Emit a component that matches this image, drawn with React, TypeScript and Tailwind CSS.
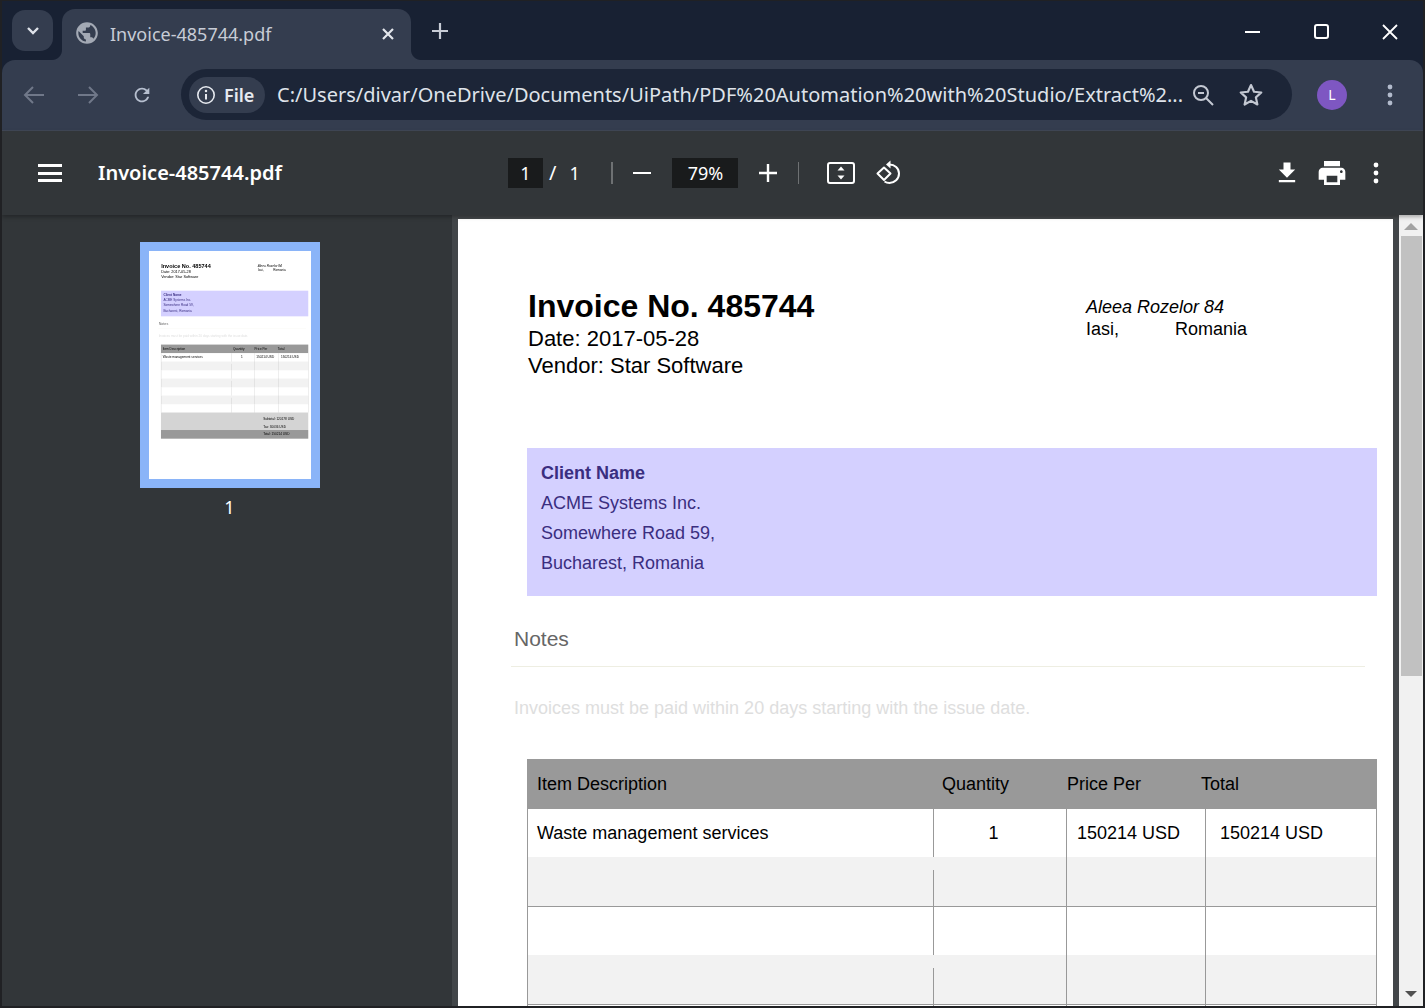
const FONT_UI = "font-['Noto_Sans',sans-serif]";
const FONT_DOC = "font-['Liberation_Sans',Arial,sans-serif]";

function Ico({ d, size, className }: { d: string; size: number; className?: string }) {
  return (
    <svg width={size} height={size} viewBox="0 0 24 24" fill="currentColor" className={className}>
      <path d={d} />
    </svg>
  );
}

function VDots({ className }: { className: string }) {
  return (
    <svg width="6" height="22" viewBox="0 0 6 22" fill="currentColor" className={className}>
      <circle cx="3" cy="3" r="2.4" />
      <circle cx="3" cy="11" r="2.4" />
      <circle cx="3" cy="19" r="2.4" />
    </svg>
  );
}

function Row({ alt, line, gap, cells }: { alt?: boolean; line?: boolean; gap?: boolean; cells?: string[] }) {
  const h = alt ? "h-[50px]" : "h-[48px]";
  return (
    <div className={`flex ${h} border-l border-r border-[#999] ${alt ? "bg-[#f2f2f2]" : "bg-white"} ${line ? "border-b" : ""}`}>
      <div className="flex w-[406px] flex-col">
        {gap ? <div className="h-[13px]" /> : null}
        <div className="flex flex-1 items-center border-r border-[#999] pl-[9px]">{cells ? cells[0] : ""}</div>
      </div>
      <div className="flex w-[133px] items-center justify-center border-r border-[#999] pr-[13px]">{cells ? cells[1] : ""}</div>
      <div className="flex w-[139px] items-center border-r border-[#999] pl-[10px]">{cells ? cells[2] : ""}</div>
      <div className="flex flex-1 items-center pl-[14px]">{cells ? cells[3] : ""}</div>
    </div>
  );
}

function InvoicePage() {
  return (
    <div className={`w-[935px] bg-white text-black ${FONT_DOC}`}>
      <div className="flex pl-[70px] pt-[68px]">
        <div className="w-[558px]">
          <div className="text-[32px] font-bold leading-[38px]">Invoice No. 485744</div>
          <div className="text-[22px] leading-[27px]">Date: 2017-05-28</div>
          <div className="text-[22px] leading-[27px]">Vendor: Star Software</div>
        </div>
        <div className="pt-[9px] text-[18px] leading-[22px]">
          <div className="italic">Aleea Rozelor 84</div>
          <div className="flex">
            <span className="w-[89px]">Iasi,</span>
            <span>Romania</span>
          </div>
        </div>
      </div>
      <div className="ml-[69px] mr-[16px] mt-[69px] h-[148px] bg-[#d4d0ff] px-[14px] pt-[10px] text-[18px] leading-[30px] text-[#3a2e80]">
        <div className="font-bold">Client Name</div>
        <div>ACME Systems Inc.</div>
        <div>Somewhere Road 59,</div>
        <div>Bucharest, Romania</div>
      </div>
      <div className="ml-[53px] mr-[28px] mt-[27px] h-[44px] border-b border-[#eeeee2] pl-[3px] font-['Liberation_Sans_Narrow','Liberation_Sans',sans-serif] text-[21px] leading-[32px] text-[#666]">
        Notes
      </div>
      <div className="ml-[56px] mt-[27px] text-[18px] leading-[28px] text-[#dedede]">
        Invoices must be paid within 20 days starting with the issue date.
      </div>
      <div className="ml-[69px] mr-[16px] mt-[37px] text-[18px] leading-[22px]">
        <div className="flex h-[50px] items-center bg-[#999]">
          <div className="w-[415px] pl-[10px]">Item Description</div>
          <div className="w-[125px]">Quantity</div>
          <div className="w-[134px]">Price Per</div>
          <div>Total</div>
        </div>
        <Row cells={["Waste management services", "1", "150214 USD", "150214 USD"]} />
        <Row alt line gap />
        <Row />
        <Row alt line gap />
        <Row />
        <Row alt line gap />
        <Row />
        <div className="flex h-[101px] flex-col bg-[#d4d4d4] pl-[590px] pt-[14px] leading-[46px]">
          <div>Subtotal: 120178 USD</div>
          <div>Tax: 30036 USD</div>
        </div>
        <div className="h-[50px] bg-[#999] pl-[590px] leading-[50px]">Total: 150214 USD</div>
      </div>
      <div className="h-[200px]" />
    </div>
  );
}

export default function App() {
  return (
    <div className={`flex h-[1008px] w-[1425px] flex-col overflow-hidden border-b-2 border-l-2 border-r-2 border-t border-[#202124] bg-[#182133] ${FONT_UI}`}>
      {/* Tab strip */}
      <div className="flex h-[59px] shrink-0 items-start">
        <button className="ml-[10px] mt-[9px] flex h-[41px] w-[41px] items-center justify-center rounded-[13px] bg-[#343d4f] text-[#dfe3ea]">
          <svg width="14" height="10" viewBox="0 0 14 10" fill="none" stroke="currentColor" strokeWidth="2.4"><path d="M2 2l5 5 5-5" /></svg>
        </button>
        <div className="relative ml-[9px] mt-[8px] flex h-[51px] w-[349px] items-center rounded-t-[13px] bg-[#343d4f] pl-[12px]">
          <span className="absolute bottom-0 left-[-10px] h-[10px] w-[10px] bg-[radial-gradient(circle_at_0_0,#182133_9.5px,#343d4f_10.5px)]" />
          <span className="absolute bottom-0 right-[-10px] h-[10px] w-[10px] bg-[radial-gradient(circle_at_100%_0,#182133_9.5px,#343d4f_10.5px)]" />
          <Ico d="M12 2C6.48 2 2 6.48 2 12s4.48 10 10 10 10-4.48 10-10S17.52 2 12 2zm-1 17.93c-3.95-.49-7-3.85-7-7.93 0-.62.08-1.21.21-1.79L9 15v1c0 1.1.9 2 2 2v1.93zm6.9-2.54c-.26-.81-1-1.39-1.9-1.39h-1v-3c0-.55-.45-1-1-1H8v-2h2c.55 0 1-.45 1-1V7h2c1.1 0 2-.9 2-2v-.41c2.93 1.19 5 4.06 5 7.41 0 2.08-.8 3.97-2.1 5.39z" size={26} className="-mt-[3px] text-[#a3a9b4]" />
          <span className="-mt-[2px] ml-[10px] flex-1 text-[18px] leading-[24px] text-[#c7ccd6]">Invoice-485744.pdf</span>
          <svg width="14" height="14" viewBox="0 0 14 14" stroke="#e4e7ec" strokeWidth="2.2" className="-mt-[2px] mr-[16px]"><path d="M2 2l10 10M12 2L2 12" /></svg>
        </div>
        <svg width="18" height="18" viewBox="0 0 18 18" stroke="#c7ccd6" strokeWidth="2.2" className="ml-[20px] mt-[21px]"><path d="M9 1v16M1 9h16" /></svg>
        <div className="flex-1" />
        <div className="mt-[30px] h-[2px] w-[15px] bg-white" />
        <div className="ml-[54px] mt-[23px] h-[15px] w-[15px] rounded-[3px] border-2 border-white" />
        <svg width="16" height="16" viewBox="0 0 16 16" stroke="white" strokeWidth="1.8" className="ml-[53px] mr-[25px] mt-[23px]"><path d="M1 1l14 14M15 1L1 15" /></svg>
      </div>
      {/* Browser toolbar */}
      <div className="flex h-[71px] shrink-0 items-center rounded-t-[13px] border-b border-[#414857] bg-[#343d4f] pb-[1px] pl-[21px]">
        <svg width="22" height="20" viewBox="0 0 22 20" fill="none" stroke="#707889" strokeWidth="2"><path d="M21 10H2M10 2l-8 8 8 8" /></svg>
        <svg width="22" height="20" viewBox="0 0 22 20" fill="none" stroke="#707889" strokeWidth="2" className="ml-[32px]"><path d="M1 10h19M12 2l8 8-8 8" /></svg>
        <svg width="22" height="22" viewBox="0 0 24 24" fill="#b6bfcf" className="ml-[32px]"><path d="M17.65 6.35A7.958 7.958 0 0 0 12 4c-4.42 0-7.99 3.58-7.99 8s3.57 8 7.99 8c3.73 0 6.84-2.55 7.73-6h-2.08A5.99 5.99 0 0 1 12 18c-3.31 0-6-2.69-6-6s2.69-6 6-6c1.66 0 3.14.69 4.22 1.78L13 11h7V4l-2.35 2.35z" /></svg>
        <div className="ml-[28px] flex h-[51px] w-[1111px] items-center rounded-full bg-[#1c2537] pl-[8px]">
          <div className="flex h-[36px] w-[76px] items-center rounded-full bg-[#343d4f] pl-[7px] text-[#e6e9ef]">
            <svg width="20" height="20" viewBox="0 0 20 20" fill="none" stroke="currentColor" strokeWidth="1.6"><circle cx="10" cy="10" r="8.2" /><path d="M10 9v5.5" strokeWidth="2" /><circle cx="10" cy="6" r="0.6" strokeWidth="1.3" /></svg>
            <span className="ml-[8px] text-[18px] font-semibold leading-[24px]">File</span>
          </div>
          <div className="ml-[12px] w-[900px] whitespace-nowrap text-[20px] leading-[26px] text-[#dfe3ea]">C:/Users/divar/OneDrive/Documents/UiPath/PDF%20Automation%20with%20Studio/Extract%2...</div>
          <svg width="24" height="24" viewBox="0 0 24 24" fill="none" stroke="#c3c8d2" strokeWidth="2" className="ml-[14px]"><circle cx="10" cy="10" r="7" /><path d="M15 15l7 7M7 10h6" /></svg>
          <svg width="26" height="26" viewBox="0 0 24 24" fill="none" stroke="#c3c8d2" strokeWidth="2" className="ml-[23px]"><path d="M12 2.8l2.8 6.2 6.7.7-5 4.5 1.4 6.6-5.9-3.4-5.9 3.4 1.4-6.6-5-4.5 6.7-.7z" strokeLinejoin="round" /></svg>
        </div>
        <div className="ml-[25px] flex h-[30px] w-[30px] items-center justify-center rounded-full bg-[#7e57c2] text-[14px] text-white">L</div>
        <VDots className="ml-[40px] text-[#b2bbcc]" />
      </div>
      {/* PDF toolbar */}
      <div className="z-10 flex h-[84px] shrink-0 items-center bg-[#323639] text-white shadow-[0_2px_4px_rgba(0,0,0,0.3)]">
        <div className="ml-[36px] flex h-[18px] w-[24px] flex-col justify-between">
          <div className="h-[3px] bg-white" />
          <div className="h-[3px] bg-white" />
          <div className="h-[3px] bg-white" />
        </div>
        <div className="ml-[36px] w-[410px] text-[20px] font-semibold leading-[26px]">Invoice-485744.pdf</div>
        <div className="flex h-[30px] w-[35px] items-center justify-center bg-[#191b1c] text-[18px]">1</div>
        <span className="ml-[6px] text-[20px]">/</span>
        <span className="ml-[13px] w-[42px] text-[18px]">1</span>
        <div className="h-[22px] w-[2px] bg-[#6e7173]" />
        <div className="ml-[20px] h-[2.5px] w-[18px] bg-white" />
        <div className="ml-[21px] flex h-[30px] w-[66px] items-center justify-center bg-[#191b1c] text-[18px]">79%</div>
        <svg width="18" height="18" viewBox="0 0 18 18" stroke="white" strokeWidth="2.4" className="ml-[21px]"><path d="M9 0v18M0 9h18" /></svg>
        <div className="ml-[21px] h-[22px] w-[1px] bg-[#6e7173]" />
        <svg width="28" height="22" viewBox="0 0 28 22" className="ml-[28px]"><rect x="1" y="1" width="26" height="20" rx="2" fill="none" stroke="white" strokeWidth="2" /><path d="M14 4.5l3.5 4h-7zM14 17.5l-3.5-4h7z" fill="white" /></svg>
        <svg width="28" height="28" viewBox="0 0 28 28" fill="none" stroke="white" strokeWidth="2" className="ml-[20px]"><path d="M9 8.5L2.5 14.5 9 21l6.5-6.5z" strokeLinejoin="round" /><path d="M14.5 5.5c5 0 9.5 3.5 9.5 9s-4.5 9.500-9.500 9.500c-2 0-3.500-.5-5-1.500" /><path d="M15.500 1.500v8l-4.500-4z" fill="white" stroke="none" /></svg>
        <div className="flex-1" />
        <Ico d="M19 9h-4V3H9v6H5l7 7 7-7zM5 18v2h14v-2H5z" size={28} className="mr-[15px]" />
        <Ico d="M19 8H5c-1.66 0-3 1.34-3 3v6h4v4h12v-4h4v-6c0-1.66-1.34-3-3-3zm-3 11H8v-5h8v5zm3-7c-.55 0-1-.45-1-1s.45-1 1-1 1 .45 1 1-.45 1-1 1zm-1-9H6v4h12V3z" size={32} className="mr-[25px]" />
        <VDots className="mr-[44px]" />
      </div>
      {/* Body */}
      <div className="flex min-h-0 flex-1">
        <div className="flex w-[450px] shrink-0 flex-col items-center bg-[#323639] pl-[5px] pt-[27px]">
          <div className="h-[246px] w-[180px] overflow-hidden border-[9px] border-[#8ab4f8] bg-white">
            <div className="h-[1322px] w-[935px] origin-top-left scale-[0.1733] blur-[1.5px]">
              <InvoicePage />
            </div>
          </div>
          <div className="mt-[7px] text-[18px] leading-[24px] text-white">1</div>
        </div>
        <div className="flex min-w-0 flex-1 bg-[#424649] pl-[6px] pt-[4px]">
          <div className="w-[935px] shrink-0 overflow-hidden">
            <InvoicePage />
          </div>
          <div className="ml-[6px] flex flex-1 flex-col items-center bg-[#f1f1f1] -mt-[4px] pt-[8px]">
            <div className="h-0 w-0 border-x-[7px] border-b-[7px] border-x-transparent border-b-[#a3a3a3]" />
            <div className="ml-[1px] mt-[6px] h-[440px] w-[21px] bg-[#c1c1c1]" />
            <div className="flex-1" />
            <div className="mb-[9px] h-0 w-0 border-x-[6px] border-t-[6px] border-x-transparent border-t-[#505050]" />
          </div>
        </div>
      </div>
    </div>
  );
}
